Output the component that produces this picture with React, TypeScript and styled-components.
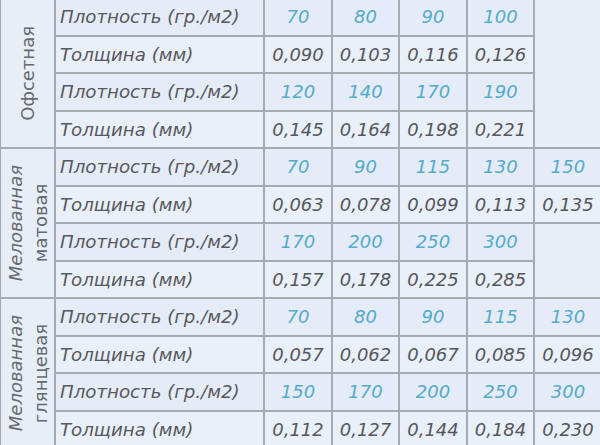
import { createGlobalStyle } from "styled-components";
import styled from "styled-components";

const GlobalStyle = createGlobalStyle`
  html, body {
    margin: 0;
    padding: 0;
    background: #e8eef8;
    overflow: hidden;
  }
`;

const Page = styled.div`
  width: 600px;
  height: 445px;
  overflow: hidden;
  background: #e8eef8;
`;

const Table = styled.table`
  border-collapse: collapse;
  table-layout: fixed;
  width: 602px;
  margin: -3px 0 0 -1px;
  font-family: "DejaVu Sans", Verdana, sans-serif;
`;

const Col = styled.col<{ $w: number }>`
  width: ${(p) => p.$w}px;
`;

const Row = styled.tr<{ $kind: "density" | "thickness" }>`
  height: 37.5px;
  background: ${(p) => (p.$kind === "density" ? "#e6ecf7" : "#eaf0f9")};
`;

const Cell = styled.td`
  border: 2px solid #a6abb3;
  padding: 0;
  vertical-align: middle;
`;

const GroupCell = styled(Cell)`
  background: #e8eef8;
  text-align: center;
`;

const GroupName = styled.div`
  writing-mode: vertical-rl;
  transform: rotate(180deg);
  margin: 0 auto;
  font-size: 18px;
  line-height: 25px;
  color: #666a70;
`;

const FirstWord = styled.span<{ $italic?: boolean }>`
  font-style: ${(p) => (p.$italic ? "italic" : "normal")};
`;

const Label = styled(Cell)`
  padding-left: 4px;
  font-size: 18.2px;
  font-style: italic;
  color: #57595e;
  white-space: nowrap;
`;

const Value = styled(Cell)<{ $kind: "density" | "thickness" }>`
  text-align: center;
  font-size: 18px;
  font-style: italic;
  color: ${(p) => (p.$kind === "density" ? "#53abcc" : "#55575c")};
`;

const Empty = styled(Cell)`
  background: #e8eef8;
`;

type Kind = "density" | "thickness";

type Group = {
  name: string[];
  rows: { kind: Kind; values: string[] }[];
};

const groups: Group[] = [
  {
    name: ["Офсетная"],
    rows: [
      { kind: "density", values: ["70", "80", "90", "100"] },
      { kind: "thickness", values: ["0,090", "0,103", "0,116", "0,126"] },
      { kind: "density", values: ["120", "140", "170", "190"] },
      { kind: "thickness", values: ["0,145", "0,164", "0,198", "0,221"] },
    ],
  },
  {
    name: ["Мелованная", "матовая"],
    rows: [
      { kind: "density", values: ["70", "90", "115", "130", "150"] },
      { kind: "thickness", values: ["0,063", "0,078", "0,099", "0,113", "0,135"] },
      { kind: "density", values: ["170", "200", "250", "300"] },
      { kind: "thickness", values: ["0,157", "0,178", "0,225", "0,285"] },
    ],
  },
  {
    name: ["Мелованная", "глянцевая"],
    rows: [
      { kind: "density", values: ["70", "80", "90", "115", "130"] },
      { kind: "thickness", values: ["0,057", "0,062", "0,067", "0,085", "0,096"] },
      { kind: "density", values: ["150", "170", "200", "250", "300"] },
      { kind: "thickness", values: ["0,112", "0,127", "0,144", "0,184", "0,230"] },
    ],
  },
];

const labels: Record<Kind, string> = {
  density: "Плотность (гр./м2)",
  thickness: "Толщина (мм)",
};

const widths = [55, 209, 68, 67, 68, 67, 68];

export default function App() {
  return (
    <Page>
      <GlobalStyle />
      <Table>
        <colgroup>
          {widths.map((w, i) => (
            <Col key={i} $w={w} />
          ))}
        </colgroup>
        <tbody>
          {groups.map((g) =>
            g.rows.map((r, i) => {
              // an empty block on the right spans the rows that only have 4 values
              const short = r.values.length < 5;
              const prevShort = i > 0 && g.rows[i - 1].values.length < 5;
              let span = 0;
              if (short && !prevShort) {
                span = 1;
                while (i + span < g.rows.length && g.rows[i + span].values.length < 5) span++;
              }
              return (
                <Row key={g.name.join() + i} $kind={r.kind}>
                  {i === 0 && (
                    <GroupCell rowSpan={4}>
                      <GroupName>
                        <FirstWord $italic={g.name.length > 1}>{g.name[0]}</FirstWord>
                        {g.name[1] && (
                          <>
                            <br />
                            {g.name[1]}
                          </>
                        )}
                      </GroupName>
                    </GroupCell>
                  )}
                  <Label>{labels[r.kind]}</Label>
                  {r.values.map((v, j) => (
                    <Value key={j} $kind={r.kind}>
                      {v}
                    </Value>
                  ))}
                  {span > 0 && <Empty rowSpan={span} />}
                </Row>
              );
            })
          )}
        </tbody>
      </Table>
    </Page>
  );
}
